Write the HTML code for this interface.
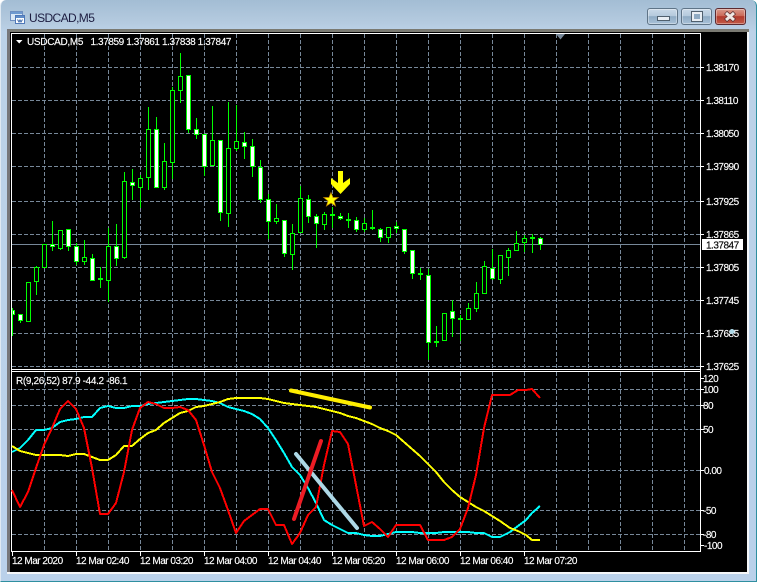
<!DOCTYPE html>
<html><head><meta charset="utf-8"><style>
html,body{margin:0;padding:0;background:#fff}
#w{position:relative;width:758px;height:582px;overflow:hidden;font-family:"Liberation Sans",sans-serif}
#f{position:absolute;left:0;top:0;width:757px;height:582px;box-sizing:border-box;border:1px solid #2f8fa0;border-width:0 1px 1px 1px;border-left-color:#dfe9f2;border-radius:6px 6px 0 0;background:linear-gradient(#a3bdd4 0,#b4cadf 22px,#bcd2e8 32px,#bad1ea 100%)}
.tt{position:absolute;left:29px;top:11px;font-size:12px;letter-spacing:-.6px;color:#1c1c40;line-height:14px}
.b{position:absolute;top:8px;height:17px;box-sizing:border-box;border:1px solid #5f7487;border-radius:3px;background:linear-gradient(#c9d9e8 0,#b5cadd 45%,#8fabc4 50%,#a9c2d8 100%);box-shadow:inset 0 0 0 1px rgba(255,255,255,.35)}
.x{background:linear-gradient(#d99a8c 0,#cc6a58 45%,#b23a2c 50%,#c25a48 100%);border-color:#5c2a30}
svg{position:absolute;left:0;top:0}
text{font-family:"Liberation Sans",sans-serif;font-size:10px;letter-spacing:-.5px;fill:#fff;stroke:#fff;stroke-width:.15px}
.k{fill:#000;stroke:#000}
.g{stroke:#778899;stroke-width:1;stroke-dasharray:4 2;fill:none}
.c rect{stroke:#0f0;stroke-width:1}
.w{fill:#fff}.h{fill:#000}.d{fill:#0f0}
</style></head><body><div id="w"><div id="f"></div>
<svg width="758" height="582" viewBox="0 0 758 582" xmlns="http://www.w3.org/2000/svg">
<g shape-rendering="crispEdges">
<rect x="7" y="29" width="742" height="3" fill="#7a7a72"/>
<rect x="7" y="29" width="3" height="544" fill="#77777a"/>
<rect x="10" y="32" width="737" height="540" fill="#000"/>
<rect x="747" y="32" width="2" height="542" fill="#f4f6f8"/>
<rect x="7" y="572" width="742" height="2" fill="#f4f6f8"/>
</g>
<!-- title icon -->
<g shape-rendering="crispEdges">
<rect x="10.5" y="11.5" width="12" height="9" fill="#dbe8f6" stroke="#6f8fc0"/>
<rect x="15.5" y="15.5" width="9" height="8" fill="#fff" stroke="#4f78b8"/>
<rect x="11" y="12" width="11" height="2" fill="#6f9ad0"/>
<rect x="16" y="16" width="8" height="2" fill="#5f8cc8"/>
</g>
<path d="M17.5 19.5l1.5 2.5 1-2 1 2 1.500-2.500" stroke="#3a66a8" fill="none"/>
<!-- grid -->
<g class="g" shape-rendering="crispEdges">
<path d="M12 67.500H700M12 100.500H700M12 133.500H700M12 166.500H700M12 201.500H700M12 234.500H700M12 267.500H700M12 300.500H700M12 333.500H700M12 366.500H700"/>
<path d="M12 389.500H700M12 405.500H700M12 429.500H700M12 470.500H700M12 510.500H700M12 534.500H700"/>
<path d="M44.500 34V369M76.500 34V369M108.500 34V369M140.500 34V369M172.500 34V369M204.500 34V369M236.500 34V369M268.500 34V369M300.500 34V369M332.500 34V369M364.500 34V369M396.500 34V369M428.500 34V369M460.500 34V369M492.500 34V369M524.500 34V369M556.500 34V369M588.500 34V369M620.500 34V369M652.500 34V369M684.500 34V369"/>
<path d="M44.500 372V551M76.500 372V551M108.500 372V551M140.500 372V551M172.500 372V551M204.500 372V551M236.500 372V551M268.500 372V551M300.500 372V551M332.500 372V551M364.500 372V551M396.500 372V551M428.500 372V551M460.500 372V551M492.500 372V551M524.500 372V551M556.500 372V551M588.500 372V551M620.500 372V551M652.500 372V551M684.500 372V551"/>
</g>
<path d="M12 244.500H700" stroke="#778899" shape-rendering="crispEdges"/>
<path d="M556 34H565L560.500 39.500Z" fill="#778899"/>
<!-- wicks -->
<path shape-rendering="crispEdges" stroke="#0f0" fill="none" d="M12.500 308V336M20.500 314V323M28.500 282V322M36.500 266V295M44.500 244V267M52.500 221V251M60.500 230V250M68.500 229V251M76.500 243V265M84.500 240V265M92.500 254V280M100.500 267V288M108.500 228V302M116.500 224V266M124.500 172V259M132.500 169V200M140.500 175V208M148.500 107V190M156.500 117V187M164.500 143V190M172.500 87V179M180.500 53V103M188.500 75V133M196.500 118V139M204.500 134V176M212.500 106V165M220.500 140V221M228.500 102V227M236.500 105V151M244.500 132V159M252.500 139V177M260.500 160V203M268.500 194V239M276.500 204V224M284.500 220V257M292.500 224V270M300.500 186V232M308.500 195V223M316.500 214V248M324.500 212V230M332.500 207V228M340.500 213V220M348.500 213V228M356.500 217V232M364.500 218V232M372.500 210V230M380.500 228V242M388.500 227V243M396.500 222V233M404.500 229V254M412.500 250V279M420.500 268V280M428.500 269V360M436.500 326V347M444.500 313V340M452.500 300V337M460.500 315V341M468.500 303V319M476.500 282V312M484.500 261V293M492.500 249V280M500.500 255V284M508.500 248V276M516.500 231V250M524.500 235V252M532.500 234V253M540.500 237V250"/>
<!-- bodies -->
<g class="c" shape-rendering="crispEdges">
<rect class="w" x="12.500" y="310.500" width="2" height="4"/>
<rect class="w" x="18.500" y="314.500" width="4" height="6"/>
<rect class="h" x="26.500" y="282.500" width="4" height="39"/>
<rect class="h" x="34.500" y="267.500" width="4" height="14"/>
<rect class="h" x="42.500" y="244.500" width="4" height="23"/>
<rect class="w" x="50.500" y="244.500" width="4" height="2"/>
<rect class="h" x="58.500" y="230.500" width="4" height="18"/>
<rect class="w" x="66.500" y="229.500" width="4" height="17"/>
<rect class="w" x="74.500" y="246.500" width="4" height="15"/>
<rect class="h" x="82.500" y="257.500" width="4" height="4"/>
<rect class="w" x="90.500" y="258.500" width="4" height="22"/>
<rect class="d" x="98.500" y="278.500" width="4" height="1"/>
<rect class="h" x="106.500" y="246.500" width="4" height="34"/>
<rect class="w" x="114.500" y="246.500" width="4" height="12"/>
<rect class="h" x="122.500" y="181.500" width="4" height="76"/>
<rect class="w" x="130.500" y="182.500" width="4" height="3"/>
<rect class="h" x="138.500" y="178.500" width="4" height="9"/>
<rect class="h" x="146.500" y="129.500" width="4" height="48"/>
<rect class="w" x="154.500" y="129.500" width="4" height="58"/>
<rect class="h" x="162.500" y="161.500" width="4" height="26"/>
<rect class="h" x="170.500" y="90.500" width="4" height="72"/>
<rect class="h" x="178.500" y="76.500" width="4" height="14"/>
<rect class="w" x="186.500" y="75.500" width="4" height="54"/>
<rect class="w" x="194.500" y="129.500" width="4" height="5"/>
<rect class="w" x="202.500" y="134.500" width="4" height="32"/>
<rect class="h" x="210.500" y="140.500" width="4" height="25"/>
<rect class="w" x="218.500" y="140.500" width="4" height="72"/>
<rect class="h" x="226.500" y="148.500" width="4" height="65"/>
<rect class="h" x="234.500" y="141.500" width="4" height="7"/>
<rect class="w" x="242.500" y="142.500" width="4" height="4"/>
<rect class="w" x="250.500" y="146.500" width="4" height="20"/>
<rect class="w" x="258.500" y="167.500" width="4" height="32"/>
<rect class="w" x="266.500" y="199.500" width="4" height="22"/>
<rect class="h" x="274.500" y="218.500" width="4" height="3"/>
<rect class="w" x="282.500" y="220.500" width="4" height="33"/>
<rect class="h" x="290.500" y="233.500" width="4" height="21"/>
<rect class="h" x="298.500" y="198.500" width="4" height="34"/>
<rect class="w" x="306.500" y="199.500" width="4" height="17"/>
<rect class="w" x="314.500" y="216.500" width="4" height="7"/>
<rect class="h" x="322.500" y="214.500" width="4" height="10"/>
<rect class="d" x="330.500" y="214.500" width="4" height="1"/>
<rect class="w" x="338.500" y="216.500" width="4" height="2"/>
<rect class="d" x="346.500" y="219.500" width="4" height="1"/>
<rect class="w" x="354.500" y="220.500" width="4" height="9"/>
<rect class="h" x="362.500" y="223.500" width="4" height="6"/>
<rect class="d" x="370.500" y="227.500" width="4" height="1"/>
<rect class="w" x="378.500" y="229.500" width="4" height="8"/>
<rect class="h" x="386.500" y="227.500" width="4" height="10"/>
<rect class="w" x="394.500" y="226.500" width="4" height="2"/>
<rect class="w" x="402.500" y="229.500" width="4" height="22"/>
<rect class="w" x="410.500" y="250.500" width="4" height="23"/>
<rect class="d" x="418.500" y="273.500" width="4" height="1"/>
<rect class="w" x="426.500" y="275.500" width="4" height="67"/>
<rect class="d" x="434.500" y="341.500" width="4" height="1"/>
<rect class="h" x="442.500" y="313.500" width="4" height="27"/>
<rect class="w" x="450.500" y="311.500" width="4" height="7"/>
<rect class="d" x="458.500" y="318.500" width="4" height="1"/>
<rect class="h" x="466.500" y="308.500" width="4" height="11"/>
<rect class="h" x="474.500" y="293.500" width="4" height="15"/>
<rect class="h" x="482.500" y="266.500" width="4" height="27"/>
<rect class="w" x="490.500" y="268.500" width="4" height="10"/>
<rect class="h" x="498.500" y="255.500" width="4" height="24"/>
<rect class="h" x="506.500" y="250.500" width="4" height="7"/>
<rect class="h" x="514.500" y="243.500" width="4" height="7"/>
<rect class="h" x="522.500" y="238.500" width="4" height="4"/>
<rect class="d" x="530.500" y="237.500" width="4" height="1"/>
<rect class="w" x="538.500" y="238.500" width="4" height="6"/>
</g>
<!-- arrow & star -->
<path d="M338 171H343V183L350 178V184L340.500 194L331 184V178L338 183Z" fill="#ff0"/>
<path d="M331 192.500L333 197.500L338.300 197.500L334 201L335.600 206L331 203L326.400 206L328 201L323.700 197.500L329 197.500Z" fill="#ff0" stroke="#c08000" stroke-width=".7"/>
<!-- frames -->
<g shape-rendering="crispEdges" fill="#fff">
<rect x="11" y="33" width="690" height="1"/>
<rect x="11" y="33" width="1" height="519"/>
<rect x="700" y="33" width="1" height="519"/>
<rect x="11" y="369" width="690" height="1"/>
<rect x="11" y="371" width="690" height="1"/>
<rect x="11" y="551" width="690" height="1"/>
<path d="M701 67h3v1h-3zM701 100h3v1h-3zM701 133h3v1h-3zM701 166h3v1h-3zM701 201h3v1h-3zM701 234h3v1h-3zM701 267h3v1h-3zM701 300h3v1h-3zM701 333h3v1h-3zM701 366h3v1h-3zM701 378h3v1h-3zM701 389h3v1h-3zM701 405h3v1h-3zM701 429h3v1h-3zM701 470h3v1h-3zM701 510h3v1h-3zM701 534h3v1h-3zM701 545h3v1h-3z"/>
<path d="M12 552h1v4h-1zM76 552h1v4h-1zM140 552h1v4h-1zM204 552h1v4h-1zM268 552h1v4h-1zM332 552h1v4h-1zM396 552h1v4h-1zM460 552h1v4h-1zM524 552h1v4h-1z"/>
</g>
<!-- indicator lines -->
<g fill="none" stroke-width="2" stroke-linejoin="round" shape-rendering="crispEdges">
<path stroke="#0ff" d="M12 452L20 448L28 440L36 430L44 430L52 428L60 422L68 420L76 419L84 417L92 417L100 408L108 406L116 408L124 408L132 406L140 406L148 404L156 403L164 402L172 401L180 400L188 399L196 399L204 400L212 401L220 403L228 407L236 409L244 411L252 414L260 419L268 428L276 440L284 453L292 467L300 475L308 488L316 503L324 520L332 525L340 529L348 533L356 533L364 535L372 536L380 536L388 534L396 532L404 532L412 532L420 533L428 533L436 533L444 532L452 532L460 532L468 532L476 533L484 533L492 537L500 537L510 532L518 526L526 520L532 513L540 506"/>
<path stroke="#ff0" d="M12 446L20 451L28 453L36 455L44 455L52 455L60 455L68 456L76 454L84 454L92 457L100 460L108 460L116 455L124 446L132 446L140 439L148 433L156 430L164 423L172 418L180 413L188 411L196 407L204 406L212 404L220 402L228 399L236 398L244 398L260 398L268 399L276 401L284 403L292 404L300 405L308 406L316 407L324 409L332 411L340 413L348 416L356 418L364 421L372 424L380 428L388 431L396 435L404 442L412 449L420 456L428 464L436 472L444 482L452 490L460 497L468 502L476 507L484 511L492 516L500 521L510 528L518 531L526 535L532 540L540 540"/>
<path stroke="#f00" d="M12 490L20 507L28 492L36 468L44 445L52 428L60 409L68 401L76 409L84 428L92 468L100 514L108 514L116 503L124 472L132 430L140 408L148 402L156 404L164 408L172 408L180 407L188 410L196 420L204 445L212 472L220 488L228 510L236 533L244 521L252 515L260 509L268 509L276 525L284 525L292 544L300 533L308 515L316 507L324 465L332 431L340 432L348 444L356 485L364 526L372 522L380 529L388 537L396 525L404 525L412 525L420 525L428 540L436 540L444 540L452 537L460 529L468 508L476 475L484 428L492 395L500 395L510 395L518 390L526 390L532 389L540 398"/>
</g>
<g fill="none" stroke-width="4" stroke-linecap="round">
<path stroke="#ffee00" d="M291 390.500L370 407.500"/>
<path stroke="#add8e6" d="M296 454L357 528"/>
<path stroke="#ed1c24" d="M294 519L321 441"/>
</g>
<!-- text -->
<path d="M16 40H22.500L19.200 43.500Z" fill="#fff"/>
<text x="27" y="45" style="letter-spacing:-.3px">USDCAD,M5</text>
<text x="90.500" y="45" style="letter-spacing:-.4px">1.37859 1.37861 1.37838 1.37847</text>
<text x="16" y="384" style="letter-spacing:-.35px">R(9,26,52) 87.9 -44.2 -86.1</text>
<text x="706" y="71">1.38170</text><text x="706" y="104">1.38110</text><text x="706" y="137">1.38050</text><text x="706" y="170">1.37990</text><text x="706" y="205">1.37925</text><text x="706" y="238">1.37865</text><text x="706" y="271">1.37805</text><text x="706" y="304">1.37745</text><text x="706" y="337">1.37685</text><text x="706" y="370">1.37625</text>
<rect x="702" y="239" width="41" height="11" fill="#fff" shape-rendering="crispEdges"/>
<text class="k" x="706" y="248.500">1.37847</text>
<text x="703" y="382">120</text><text x="703" y="393">100</text><text x="703" y="409">80</text><text x="703" y="433">50</text><text x="704" y="474">0.00</text><text x="703" y="514">-50</text><text x="703" y="538">-80</text><text x="704" y="549">-100</text>
<text x="12" y="564">12 Mar 2020</text><text x="76" y="564">12 Mar 02:40</text><text x="140" y="564">12 Mar 03:20</text><text x="204" y="564">12 Mar 04:00</text><text x="268" y="564">12 Mar 04:40</text><text x="332" y="564">12 Mar 05:20</text><text x="396" y="564">12 Mar 06:00</text><text x="460" y="564">12 Mar 06:40</text><text x="524" y="564">12 Mar 07:20</text>
<circle cx="732" cy="331.500" r="2.500" fill="#add8e6"/>
</svg>
<div class="tt">USDCAD,M5</div>
<div class="b" style="left:647px;width:31px"><div style="position:absolute;left:9px;top:7px;width:11px;height:3px;background:#e8eef4;border:1px solid #50606e"></div></div>
<div class="b" style="left:681px;width:31px"><div style="position:absolute;left:10px;top:3px;width:6px;height:5px;border:2px solid #e8eef4;outline:1px solid #50606e;background:#8fabc4"></div></div>
<div class="b x" style="left:715px;width:31px"><svg width="29" height="15" style="left:0;top:0"><path d="M9.500 3.500L18.500 11.500M18.500 3.500L9.500 11.500" stroke="#5c3030" stroke-width="4.500"/><path d="M10 4L18 11M18 4L10 11" stroke="#f0e8e4" stroke-width="3"/></svg></div>
</div></body></html>
